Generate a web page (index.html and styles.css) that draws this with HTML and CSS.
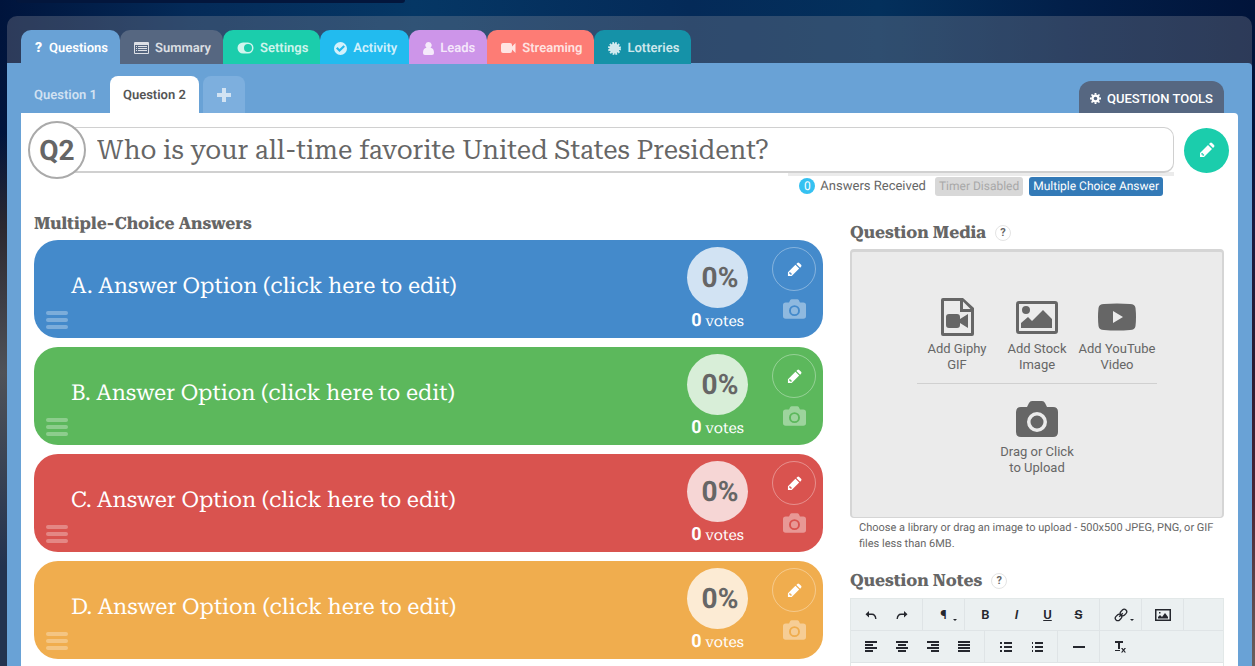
FILE: index.html
```html
<!DOCTYPE html>
<html lang="en">
<head>
<meta charset="utf-8">
<title>Question Editor</title>
<link rel="stylesheet" href="styles.css">
</head>
<body>
<svg class="sprite" aria-hidden="true">
  <symbol id="pencil" viewBox="0 0 16 16"><path fill-rule="evenodd" d="M1 15v-4L9 3l4 4-8 8zM10 2l1-1q1-1 2 0l2 2q1 1 0 2l-1 1zM2.300 11.500v1h1.200v1.200h1l.8-.8-2.200-2.200z"/></symbol>
  <symbol id="camera" viewBox="0 0 42 36"><path fill-rule="evenodd" d="M11 6l2-4q1-2 3-2h10q2 0 3 2l2 4h6q5 0 5 5v20q0 5-5 5H5q-5 0-5-5V11q0-5 5-5zM21 11a10 10 0 1 0 0 20 10 10 0 1 0 0-20zm0 3.500a6.500 6.500 0 1 1 0 13 6.500 6.500 0 1 1 0-13z"/></symbol>
  <symbol id="undo" viewBox="0 0 12 10"><path d="M4 1v2.500h3q4 0 4.500 5.500h-1.300Q9.500 5 7 5H4v2.500L.500 4.200z"/></symbol>
</svg>
<div class="topbar"></div>
<main class="app">
  <nav class="tabs">
    <a href="#questions" class="tab tab-questions"><b class="mark">?</b>Questions</a>
    <a href="#summary" class="tab tab-summary"><svg width="15" height="12" viewBox="0 0 15 12"><path fill-rule="evenodd" d="M1 0h13q1 0 1 1v10q0 1-1 1H1q-1 0-1-1V1q0-1 1-1zM1 3v8h13V3zM2 4h1v1H2zm2 0h9v1H4zM2 6h1v1H2zm2 0h9v1H4zM2 8h1v1H2zm2 0h9v1H4z"/></svg>Summary</a>
    <a href="#settings" class="tab tab-settings"><svg width="17" height="12" viewBox="0 0 17 12"><path fill-rule="evenodd" d="M6 .500h5a5.500 5.500 0 0 1 0 11H6A5.500 5.500 0 0 1 6 .500zm5 1.500a4 4 0 1 0 0 8 4 4 0 1 0 0-8z"/></svg>Settings</a>
    <a href="#activity" class="tab tab-activity"><svg width="13" height="13" viewBox="0 0 13 13"><path fill-rule="evenodd" d="M6.500 0a6.500 6.500 0 1 1 0 13 6.500 6.500 0 1 1 0-13zM5.500 10L11 4.700 9.500 3.200l-4 3.900-2-2L2 6.600z"/></svg>Activity</a>
    <a href="#leads" class="tab tab-leads"><svg width="11" height="13" viewBox="0 0 11 13"><path d="M5.500 0a3.200 3.200 0 0 1 2 5.700Q11 6 11 11q0 2-2 2H2q-2 0-2-2 0-5 3.500-5.300a3.200 3.200 0 0 1 2-5.700z"/></svg>Leads</a>
    <a href="#streaming" class="tab tab-streaming"><svg width="15" height="12" viewBox="0 0 15 12"><path d="M2 1h7q2 0 2 2v1.500L14.500 1v10L11 7.500V9q0 2-2 2H2q-2 0-2-2V3q0-2 2-2z"/></svg>Streaming</a>
    <a href="#lotteries" class="tab tab-lotteries"><svg width="13" height="13" viewBox="0 0 13 13"><circle cx="6.500" cy="6.500" r="5"/><circle cx="6.500" cy="6.500" r="5.500" fill="none" stroke="currentColor" stroke-width="2" stroke-dasharray="1.730 1.150"/></svg>Lotteries</a>
  </nav>
  <section class="workspace">
    <div class="subnav">
      <a href="#q1" class="subtab">Question 1</a>
      <a href="#q2" class="subtab active">Question 2</a>
      <button class="add" aria-label="Add question"><svg width="14" height="14" viewBox="0 0 14 14"><path d="M5 0h4v5h5v4H9v5H5V9H0V5h5z"/></svg></button>
      <button class="tools"><svg width="11" height="11" viewBox="0 0 12 12"><circle cx="6" cy="6" r="3.200" fill="none" stroke="currentColor" stroke-width="2.400"/><path d="M5 0h2v2H5zM5 10h2v2H5zM0 5h2v2H0zM10 5h2v2h-2zM1 2.300L2.300 1l1.600 1.500-1.400 1.400zM11 2.300L9.700 1 8.100 2.500l1.400 1.400zM1 9.700L2.300 11l1.600-1.500-1.400-1.400zM11 9.700L9.700 11 8.100 9.500l1.400-1.400z"/></svg>QUESTION TOOLS</button>
    </div>
    <div class="sheet">
      <div class="question">
        <label class="number" for="question">Q2</label>
        <input id="question" class="prompt" value="Who is your all-time favorite United States President?">
        <button class="save" aria-label="Edit question"><svg width="16" height="16"><use href="#pencil"/></svg></button>
      </div>
      <div class="status">
        <span class="count">0</span><span class="received">Answers Received</span>
        <span class="label muted">Timer Disabled</span><span class="label primary">Multiple Choice Answer</span>
      </div>
      <div class="columns">
        <section class="answers">
          <h2>Multiple-Choice Answers</h2>
          <article class="answer blue"><button class="grip" aria-label="Reorder"><i></i><i></i><i></i></button><p>A. Answer Option (click here to edit)</p><div class="score"><strong>0%</strong><span><b>0</b> votes</span></div><div class="actions"><button class="edit" aria-label="Edit answer"><svg width="15" height="15"><use href="#pencil"/></svg></button><button class="photo" aria-label="Add photo"><svg width="23" height="20"><use href="#camera"/></svg></button></div></article>
          <article class="answer green"><button class="grip" aria-label="Reorder"><i></i><i></i><i></i></button><p>B. Answer Option (click here to edit)</p><div class="score"><strong>0%</strong><span><b>0</b> votes</span></div><div class="actions"><button class="edit" aria-label="Edit answer"><svg width="15" height="15"><use href="#pencil"/></svg></button><button class="photo" aria-label="Add photo"><svg width="23" height="20"><use href="#camera"/></svg></button></div></article>
          <article class="answer red"><button class="grip" aria-label="Reorder"><i></i><i></i><i></i></button><p>C. Answer Option (click here to edit)</p><div class="score"><strong>0%</strong><span><b>0</b> votes</span></div><div class="actions"><button class="edit" aria-label="Edit answer"><svg width="15" height="15"><use href="#pencil"/></svg></button><button class="photo" aria-label="Add photo"><svg width="23" height="20"><use href="#camera"/></svg></button></div></article>
          <article class="answer orange"><button class="grip" aria-label="Reorder"><i></i><i></i><i></i></button><p>D. Answer Option (click here to edit)</p><div class="score"><strong>0%</strong><span><b>0</b> votes</span></div><div class="actions"><button class="edit" aria-label="Edit answer"><svg width="15" height="15"><use href="#pencil"/></svg></button><button class="photo" aria-label="Add photo"><svg width="23" height="20"><use href="#camera"/></svg></button></div></article>
        </section>
        <aside class="side">
          <h2>Question Media <button class="help" aria-label="About media">?</button></h2>
          <div class="media">
            <div class="sources">
              <button><svg width="33" height="38" viewBox="0 0 33 38"><path fill-rule="evenodd" d="M2 0h20l11 10v26q0 2-2 2H2q-2 0-2-2V2q0-2 2-2zM3 3v32h27V14H19V3zM22 3.500V11h7.500zM8 16h8q3 0 3 3v2l8-5v14l-8-5v2q0 3-3 3H8q-3 0-3-3v-8q0-3 3-3z"/></svg><span>Add Giphy GIF</span></button>
              <button><svg width="42" height="38" viewBox="0 0 42 38"><path fill-rule="evenodd" d="M3 3h36q3 0 3 3v27q0 3-3 3H3q-3 0-3-3V6q0-3 3-3zm0 3v27h36V6zM10 8a4 4 0 1 1 0 8 4 4 0 1 1 0-8zM5 30v-5l7-6 4 4 11-11 9 9v9z"/></svg><span>Add Stock Image</span></button>
              <button><svg width="38" height="38" viewBox="0 0 38 38"><path fill-rule="evenodd" d="M6 6q13-1 26 0 5 0 5.500 4 1 9 0 18-.5 4-5.500 4-13 1-26 0-5 0-5.500-4-1-9 0-18Q1 6 6 6zm9 7v12l10-6z"/></svg><span>Add YouTube Video</span></button>
            </div>
            <button class="upload"><svg width="42" height="36"><use href="#camera"/></svg><span>Drag or Click to Upload</span></button>
          </div>
          <p class="hint">Choose a library or drag an image to upload - 500x500 JPEG, PNG, or GIF files less than 6MB.</p>
          <h2>Question Notes <button class="help" aria-label="About notes">?</button></h2>
          <div class="editor">
            <div class="row">
              <div class="group"><button aria-label="Undo"><svg width="12" height="10"><use href="#undo"/></svg></button><button aria-label="Redo"><svg class="flip" width="12" height="10"><use href="#undo"/></svg></button></div>
              <div class="group"><button class="drop" aria-label="Paragraph">¶</button></div>
              <div class="group"><button aria-label="Bold">B</button><button aria-label="Italic"><i>I</i></button><button aria-label="Underline"><u>U</u></button><button aria-label="Strikethrough"><s>S</s></button></div>
              <div class="group"><button class="drop" aria-label="Link"><svg class="line" width="14" height="14" viewBox="0 0 14 14"><g transform="rotate(-45 7 7)"><rect x="0" y="4.500" width="7" height="5" rx="2.500"/><rect x="7" y="4.500" width="7" height="5" rx="2.500"/><path d="M4.500 7h5"/></g></svg></button></div>
              <div class="group"><button aria-label="Image"><svg width="16" height="12" viewBox="0 0 16 12"><path fill-rule="evenodd" d="M0 0h16v12H0zM1.500 1.500v9h13v-9zM3 9.500V8l2-2 2 2 3-4 3 4v1.500zM4 3h1.500v1.500H4z"/></svg></button></div>
            </div>
            <div class="row">
              <div class="group">
                <button aria-label="Align left"><svg width="12" height="11"><path d="M0 0h12v2H0zM0 3h8v2H0zM0 6h12v2H0zM0 9h8v2H0z"/></svg></button>
                <button aria-label="Align center"><svg width="12" height="11"><path d="M0 0h12v2H0zM2 3h8v2H2zM0 6h12v2H0zM2 9h8v2H2z"/></svg></button>
                <button aria-label="Align right"><svg width="12" height="11"><path d="M0 0h12v2H0zM4 3h8v2H4zM0 6h12v2H0zM4 9h8v2H4z"/></svg></button>
                <button aria-label="Justify"><svg width="12" height="11"><path d="M0 0h12v2H0zM0 3h12v2H0zM0 6h12v2H0zM0 9h12v2H0z"/></svg></button>
              </div>
              <div class="group">
                <button aria-label="Bulleted list"><svg width="12" height="10"><path d="M0 0h2v2H0zM4 0h8v2H4zM0 4h2v2H0zM4 4h8v2H4zM0 8h2v2H0zM4 8h8v2H4z"/></svg></button>
                <button aria-label="Numbered list"><svg width="12" height="10"><path d="M1 0h1v2H1zM4 0h8v2H4zM1 4h1v2H1zM4 4h8v2H4zM1 8h1v2H1zM4 8h8v2H4z"/></svg></button>
              </div>
              <div class="group"><button aria-label="Horizontal line"><svg width="12" height="2"><path d="M0 0h12v2H0z"/></svg></button></div>
              <div class="group last"><button aria-label="Clear formatting"><svg width="12" height="12" viewBox="0 0 12 12"><path d="M0 0h8v2H5v6H3V2H0zM0 9h5v1H0zM6 7h1.500l1 1.200L9.500 7H11L9.300 9.200 11 11.500H9.500l-1-1.400-1 1.400H6l1.700-2.300z"/></svg></button></div>
            </div>
            <textarea aria-label="Question notes"></textarea>
          </div>
        </aside>
      </div>
    </div>
  </section>
</main>
</body>
</html>
```
FILE: styles.css
```css
* { box-sizing: border-box; }
body {
  margin: 0;
  height: 100vh;
  overflow: hidden;
  display: flex;
  flex-direction: column;
  font-family: Roboto, "Liberation Sans", sans-serif;
  font-size: 13px;
  text-rendering: geometricPrecision;
  color: #666;
  background:
    linear-gradient(180deg, transparent 20%, #2b2830 34%, #4f5258 56%, #23334f 85%, #23334f) left / 8px 100% no-repeat,
    linear-gradient(180deg, transparent 20%, #191a40 34%, #2a1b33 55%, #4a2535 75%, #68615f) right / 5px 100% no-repeat,
    linear-gradient(90deg, #00143c, #042a58 15%, #053765 33%, #042a58 55%, #03305c 70%, #021f49 85%, #01143a);
}
button { font: inherit; color: inherit; background: none; border: 0; padding: 0; }
a { color: inherit; text-decoration: none; }
svg { fill: currentColor; flex: none; }
h2, p { margin: 0; }
.sprite { position: absolute; width: 0; height: 0; }
.topbar { height: 3px; width: 31%; margin-left: 16px; background: #03163c; border-radius: 0 0 8px 8px; flex: none; }
.app {
  flex: 1;
  min-height: 0;
  display: flex;
  flex-direction: column;
  margin: 13px 3px 0 7px;
  padding-top: 14px;
  background: rgba(150, 150, 160, .3);
  border-radius: 10px 10px 0 0;
}
.tabs { position: relative; z-index: 1; display: flex; padding-left: 14px; flex: none; }
.tab {
  display: flex;
  align-items: center;
  gap: 6px;
  height: 34px;
  padding: 2px 12px 0 14px;
  border-radius: 10px 10px 0 0;
  font-weight: 600;
  color: rgba(255, 255, 255, .8);
}
.mark { width: 8px; font-size: 14px; font-weight: 900; }
.tab-questions { background: #69a2d6; color: #fff; }
.tab-summary { background: #566781; }
.tab-settings { background: #1bcdac; }
.tab-activity { background: #22bbef; }
.tab-leads { background: #cd95e9; }
.tab-streaming { background: #fd7c75; }
.tab-lotteries { background: #1592a8; }
.workspace {
  flex: 1;
  min-height: 0;
  display: flex;
  flex-direction: column;
  margin-top: -1px;
  padding: 0 14px;
  background: #69a2d6;
  border-radius: 0 4px 0 0;
}
.subnav { display: flex; align-items: flex-end; height: 50px; flex: none; }
.subtab {
  height: 37px;
  line-height: 39px;
  padding: 0 13px;
  font-weight: 600;
  color: rgba(255, 255, 255, .7);
}
.active { background: #fff; color: #555; border-radius: 8px 8px 0 0; }
.add {
  display: grid;
  place-items: center;
  width: 42px;
  height: 37px;
  margin-left: 4px;
  border-radius: 8px 8px 0 0;
  background: #7dafde;
  color: #d2e3f3;
}
.tools {
  display: flex;
  align-items: center;
  gap: 6px;
  height: 32px;
  margin: 0 14px 0 auto;
  padding: 2px 11px 0;
  border-radius: 12px 12px 0 0;
  background: #566781;
  color: #fff;
  font-weight: 500;
}
.sheet { flex: 1; min-height: 0; overflow: hidden; padding: 8px 9px 0 7px; background: #fff; border-radius: 0 4px 0 0; }
.question { display: flex; align-items: center; }
.number {
  display: grid;
  place-items: center;
  width: 58px;
  height: 58px;
  flex: none;
  z-index: 1;
  border: 2px solid #aaa;
  border-radius: 50%;
  background: #fff;
  font-size: 28px;
  font-weight: 700;
}
.prompt {
  flex: 1;
  min-width: 0;
  height: 46px;
  margin: 0 10px 0 -20px;
  padding: 0 10px 0 30px;
  border: 1px solid #d0d0d0;
  border-bottom-width: 2px;
  border-radius: 0 10px 10px 0;
  color: #666;
  font: 26px "Roboto Slab", "Roboto Serif", "DejaVu Serif", serif;
}
.save {
  display: grid;
  place-items: center;
  width: 45px;
  height: 45px;
  border-radius: 50%;
  background: #1bcdac;
  color: #fff;
}
.status {
  display: flex;
  align-items: center;
  width: fit-content;
  height: 24px;
  margin: -7px 55px 0 auto;
  padding: 0 11px;
  border-top: 4px solid #ebebeb;
  border-radius: 0 0 4px 4px;
}
.count {
  width: 16px;
  line-height: 16px;
  margin-right: 5px;
  border-radius: 50%;
  background: #35c1f1;
  color: #fff;
  font-size: 12px;
  text-align: center;
}
.received { margin-right: 9px; }
.label { padding: 0 4px; line-height: 19px; border-radius: 3px; font-size: 12px; }
.muted { margin-right: 6px; background: #d8d8d8; color: #a8a8a8; }
.primary { background: #337ab7; color: #fff; }
.columns { display: grid; grid-template-columns: minmax(0, 789fr) minmax(0, 374fr); gap: 27px; padding: 0 5px 0 6px; }
h2 {
  display: flex;
  align-items: center;
  gap: 9px;
  font: bold 17px/24px "Roboto Slab", "Roboto Serif", "DejaVu Serif", serif;
}
.answers { padding-top: 16px; }
.answers h2 { margin-bottom: 4px; }
.answer {
  display: grid;
  grid-template-columns: 37px minmax(0, 1fr) 61px 68px;
  height: 98px;
  margin-bottom: 9px;
  padding: 7px 7px 7px 0;
  border-radius: 24px;
  color: #fff;
}
.blue { background: #448acb; }
.green { background: #5cb85c; }
.red { background: #d9534f; }
.orange { background: #f0ad4e; }
.answer p {
  align-self: center;
  padding-bottom: 8px;
  font: 22px "Roboto Slab", "Roboto Serif", "DejaVu Serif", serif;
  white-space: nowrap;
}
.grip { display: grid; gap: 3px; align-self: end; width: 22px; margin: 0 0 5px 12px; opacity: .3; }
.grip i { height: 4px; border-radius: 2px; background: #fff; }
.score { text-align: center; white-space: nowrap; }
.score strong {
  display: grid;
  place-items: center;
  height: 61px;
  padding-left: 5px;
  border-radius: 50%;
  background: rgba(255, 255, 255, .76);
  color: #666;
  font-size: 28px;
}
.score span { display: block; line-height: 26px; font-family: "Roboto Slab", "Roboto Serif", "DejaVu Serif", serif; font-size: 15px; }
.score b { font-family: Roboto, sans-serif; font-size: 18px; }
.actions { display: grid; justify-items: end; align-content: start; gap: 8px; }
.edit {
  display: grid;
  place-items: center;
  width: 44px;
  height: 44px;
  border: 1px solid rgba(255, 255, 255, .35);
  border-radius: 50%;
}
.photo { display: grid; width: 23px; margin-right: 10px; opacity: .4; }
.side { padding-top: 25px; }
.side h2 { margin-bottom: 4px; }
.help {
  width: 16px;
  height: 16px;
  border: 1px solid #e4e4e4;
  border-radius: 50%;
  font: bold 11px/14px Roboto, sans-serif;
}
.media {
  display: flex;
  flex-direction: column;
  align-items: center;
  height: 269px;
  padding-top: 46px;
  border: 2px solid #d5d5d5;
  border-top-width: 3px;
  border-bottom-width: 1px;
  border-radius: 4px;
  background: #ebebeb;
  line-height: 16px;
}
.sources { display: grid; grid-template-columns: repeat(3, 80px); padding-bottom: 10px; border-bottom: 1px solid #d0d0d0; }
.media button { display: flex; flex-direction: column; align-items: center; gap: 5px; }
.media .upload { width: 80px; margin-top: 17px; gap: 7px; }
.hint { padding: 2px 9px 0; font-size: 11px; line-height: 16px; margin-bottom: 17px; }
.editor { margin-top: 5px; border: 1px solid #e2e8e8; background: #ebf0f1; color: #25272e; }
.row { display: flex; height: 32px; border-bottom: 1px solid #dfe4e6; }
.group { display: flex; padding: 0 5px; border-right: 1px solid #dfe4e6; }
.group:first-child { padding-left: 4px; }
.last { border: 0; }
.group button { position: relative; display: grid; place-items: center; width: 31px; font-size: 13px; font-weight: 600; }
.drop::after {
  content: "";
  position: absolute;
  right: 2px;
  bottom: 7px;
  border: 2px solid transparent;
  border-top-color: currentColor;
}
.line { fill: none; stroke: currentColor; stroke-width: 1.3px; }
.flip { transform: scaleX(-1); }
.editor textarea { display: block; width: 100%; height: 80px; border: 0; resize: none; }
```
